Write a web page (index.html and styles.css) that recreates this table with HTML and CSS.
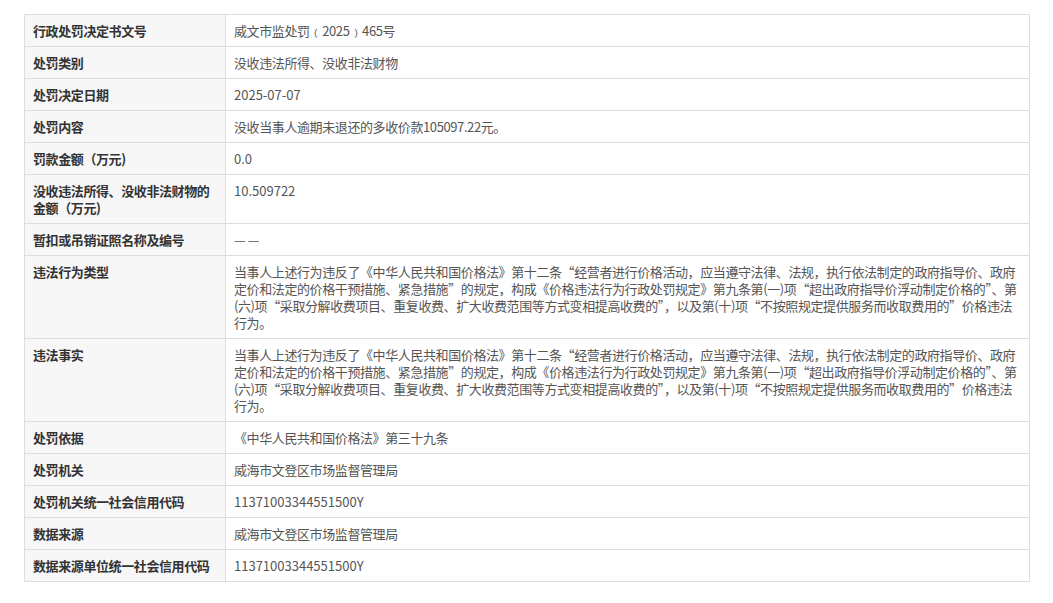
FILE: index.html
```html
<!DOCTYPE html>
<html lang="zh-CN">

<head>
    <meta charset="UTF-8">
    <meta name="viewport" content="width=device-width, initial-scale=1.0">
    <title>行政处罚信息</title>
    <link rel="stylesheet" href="styles.css">
</head>

<body>
    <div class="wrap">
        <table class="detail">
            <tr>
                <th>行政处罚决定书文号</th>
                <td>威文市监处罚﹙2025﹚465号</td>
            </tr>
            <tr>
                <th>处罚类别</th>
                <td>没收违法所得、没收非法财物</td>
            </tr>
            <tr>
                <th>处罚决定日期</th>
                <td class="num">2025-07-07</td>
            </tr>
            <tr>
                <th>处罚内容</th>
                <td>没收当事人逾期未退还的多收价款105097.22元。</td>
            </tr>
            <tr>
                <th>罚款金额（万元)</th>
                <td class="num">0.0</td>
            </tr>
            <tr>
                <th>没收违法所得、没收非法财物的金额（万元)</th>
                <td class="num">10.509722</td>
            </tr>
            <tr>
                <th>暂扣或吊销证照名称及编号</th>
                <td>— —</td>
            </tr>
            <tr>
                <th>违法行为类型</th>
                <td>当事人上述行为违反了《中华人民共和国价格法》第十二条“经营者进行价格活动，应当遵守法律、法规，执行依法制定的政府指导价、政府定价和法定的价格干预措施、紧急措施”的规定，构成《价格违法行为行政处罚规定》第九条第(一)项“超出政府指导价浮动制定价格的”、第(六)项“采取分解收费项目、重复收费、扩大收费范围等方式变相提高收费的”，以及第(十)项“不按照规定提供服务而收取费用的”价格违法行为。</td>
            </tr>
            <tr>
                <th>违法事实</th>
                <td>当事人上述行为违反了《中华人民共和国价格法》第十二条“经营者进行价格活动，应当遵守法律、法规，执行依法制定的政府指导价、政府定价和法定的价格干预措施、紧急措施”的规定，构成《价格违法行为行政处罚规定》第九条第(一)项“超出政府指导价浮动制定价格的”、第(六)项“采取分解收费项目、重复收费、扩大收费范围等方式变相提高收费的”，以及第(十)项“不按照规定提供服务而收取费用的”价格违法行为。</td>
            </tr>
            <tr>
                <th>处罚依据</th>
                <td>《中华人民共和国价格法》第三十九条</td>
            </tr>
            <tr>
                <th>处罚机关</th>
                <td>威海市文登区市场监督管理局</td>
            </tr>
            <tr>
                <th>处罚机关统一社会信用代码</th>
                <td class="num">11371003344551500Y</td>
            </tr>
            <tr>
                <th>数据来源</th>
                <td>威海市文登区市场监督管理局</td>
            </tr>
            <tr>
                <th>数据来源单位统一社会信用代码</th>
                <td class="num">11371003344551500Y</td>
            </tr>
        </table>
    </div>
</body>

</html>
```

FILE: styles.css
```css
* {
    margin: 0;
    padding: 0;
}

body {
    font-family: "Noto Sans CJK SC", "Liberation Sans", sans-serif;
    font-size: 13px;
    letter-spacing: -0.4px;
    color: #555;
    background-color: #fff;
}

.wrap {
    padding: 14px 23px 0 24px;
}

.detail {
    width: 100%;
    border-collapse: collapse;
    border: 1px solid #ddd;
}

.detail th,
.detail td {
    border: 1px solid #ddd;
    padding: 7px 8px;
    line-height: 17px;
    text-align: left;
    vertical-align: top;
}

.detail th {
    width: 184px;
    background-color: #f7f7f7;
    color: #333;
    font-weight: bold;
}

.detail .num {
    letter-spacing: 0;
}
```
